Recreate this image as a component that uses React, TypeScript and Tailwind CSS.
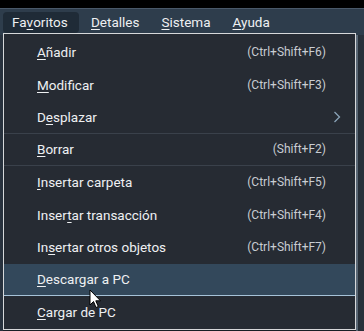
import type { ReactNode } from 'react'

interface Item {
  label: ReactNode
  shortcut?: string
  submenu?: boolean
  separatorAfter?: boolean
  active?: boolean
}

const U = ({ children }: { children: ReactNode }) => <span className="underline underline-offset-2">{children}</span>

const items: Item[] = [
  { label: <><U>A</U>ñadir</>, shortcut: '(Ctrl+Shift+F6)' },
  { label: <><U>M</U>odificar</>, shortcut: '(Ctrl+Shift+F3)' },
  { label: <>D<U>e</U>splazar</>, submenu: true, separatorAfter: true },
  { label: <><U>B</U>orrar</>, shortcut: '(Shift+F2)', separatorAfter: true },
  { label: <><U>I</U>nsertar carpeta</>, shortcut: '(Ctrl+Shift+F5)' },
  { label: <>Inser<U>t</U>ar transacción</>, shortcut: '(Ctrl+Shift+F4)' },
  { label: <>In<U>s</U>ertar otros objetos</>, shortcut: '(Ctrl+Shift+F7)' },
  { label: <><U>D</U>escargar a PC</>, active: true },
  { label: <><U>C</U>argar de PC</> },
]

const MenuRow = ({ item }: { item: Item }) => (
  <div
    className={`flex h-[32.5px] items-center pr-[29px] pl-[33px] ${
      item.active ? 'border-b border-[#a6c2d8] bg-[#33485b]' : ''
    } ${item.separatorAfter ? 'border-b border-[#3a414b]' : ''}`}
  >
    <span className="flex-1 text-[13.5px] text-[#eef0f2]">{item.label}</span>
    {item.shortcut && <span className="text-[12px] text-[#c9cdd2]">{item.shortcut}</span>}
    {item.submenu && (
      <svg width="8" height="12" viewBox="0 0 8 12" className="mr-[-15px]">
        <path d="M1.5 1 L6.5 6 L1.5 11" fill="none" stroke="#8aa3b8" strokeWidth="1.3" />
      </svg>
    )}
  </div>
)

export default function App() {
  return (
    <div className="relative h-[331px] w-[364px] overflow-hidden bg-[#1d242c] font-['Roboto',sans-serif]">
      <div className="h-[8px] bg-black" />
      <div className="h-px bg-[#4a5969]" />
      <div className="flex h-[26px] items-center bg-[#2e3d4c] px-[3px] pt-px text-[13.5px] text-[#eef0f2]">
        <div className="flex h-[21px] w-[76px] items-center rounded-sm bg-[#1f2b37] pl-[9px]">
          Fa<U>v</U>oritos
        </div>
        <div className="ml-[12px]"><U>D</U>etalles</div>
        <div className="ml-[22px]"><U>S</U>istema</div>
        <div className="ml-[22px]"><U>A</U>yuda</div>
      </div>
      <div className="flex h-full">
        <div className="w-[3px] bg-[#2a3440]" />
        <div className="flex-1" />
        <div className="w-[2px] bg-[#5d6b79]" />
        <div className="w-[6px] bg-[#28313b]" />
      </div>

      <div className="absolute top-[33px] left-[3px] w-[353px] border border-[#d6d8da] bg-[#262b33] pt-[2px] shadow-lg">
        {items.map((item, i) => (
          <MenuRow key={i} item={item} />
        ))}
      </div>

      <svg className="absolute top-[289px] left-[89px]" width="13" height="20" viewBox="0 0 13 20">
        <path d="M1 1 L1 16 L4.5 12.5 L7 18.5 L9.3 17.5 L6.8 11.8 L11.5 11.8 Z" fill="white" stroke="black" strokeWidth="1" />
      </svg>
    </div>
  )
}
